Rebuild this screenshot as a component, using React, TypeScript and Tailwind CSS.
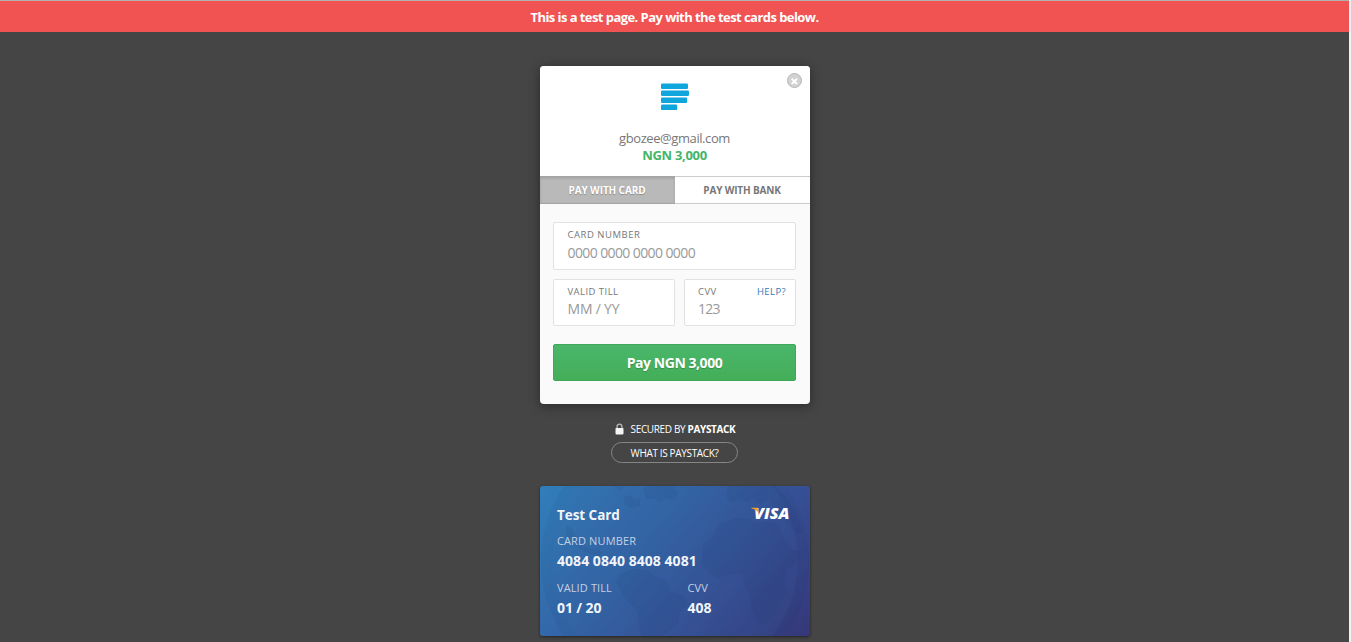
import React from "react";

function BrandMark() {
  return (
    <svg width="30" height="30" viewBox="0 0 30 30" fill="#0fa5dd" className="block">
      <rect x="1" y="1.5" width="27" height="5.5" rx="1.2" />
      <rect x="1" y="8.5" width="28" height="5.5" rx="1.2" />
      <rect x="1" y="15.5" width="26.2" height="5.5" rx="1.2" />
      <rect x="1" y="22.6" width="16.2" height="5.5" rx="1.2" />
    </svg>
  );
}

function CloseIcon() {
  return (
    <svg width="16" height="16" viewBox="0 0 16 16" className="block">
      <circle cx="8.5" cy="8.5" r="7" fill="#d2d2d2" stroke="#b8b8b8" strokeWidth="1" />
      <path d="M5.7 6.8l5.4 5.2M11.1 6.8l-5.4 5.2" stroke="#fff" strokeWidth="1.9" />
    </svg>
  );
}

function LockIcon() {
  return (
    <svg width="9" height="12" viewBox="0 0 9 12" className="block">
      <path d="M2.1 5.5V3.5a2.4 2.4 0 0 1 4.8 0v2" fill="none" stroke="#b9b9b9" strokeWidth="1.3" />
      <rect x="0.5" y="5" width="8" height="6.4" rx="0.8" fill="#f4f4f4" />
    </svg>
  );
}

function Globe() {
  return (
    <svg width="270" height="150" viewBox="0 0 270 150" className="absolute inset-0">
      <circle cx="135" cy="75" r="134" fill="#0b3a5c" fillOpacity="0.06" />
      <circle cx="135" cy="75" r="123" fill="#4a7cc0" fillOpacity="0.09" />
      <g fill="#102a5c" fillOpacity="0.07">
        <path d="M26 40c5 0 8 4 9 10l6 8 9 5 8 0 5 4-4 3-12-3-13-8-8-10z" />
        <path d="M80 88l14-5 13 1 9 7 10 4 4 10 14 5 3 7-7 10-3 11-10 8-5 4h-20l-3-8-1-17-12-11-7-12-3-7z" />
        <path d="M188 0h48c13 13 22 29 27 48l-8-2-9-9-3-10-8-4-6-9-10 4-5-7-7 6-8-5-6 5-7-6z" />
        <path d="M180 38l16-6 14 1 6 4 12-2 11 5 5 13 9 11 9 2-6 11-10 8-2 13 4 7-8 11-7 14-10 7-6-1-6-15-1-12-5-10-3-11-15 1-9 3-10-5-6-9 1-19 8-7z" />
        <path d="M84 11l7-2 3 5 6-1v7l-9 2-7-4zM74 0h10l-4 5zM103 2l10-2h20l6 7-5 7-10-2-3 5-7-4-8 0z" />
      </g>
    </svg>
  );
}

function VisaLogo() {
  return (
    <svg width="39" height="14" viewBox="0 0 39 14" className="mt-[2px] block overflow-visible">
      <text
        x="3"
        y="12"
        textLength="35.5"
        lengthAdjust="spacingAndGlyphs"
        fill="#fff"
        className="font-['Open_Sans',sans-serif] text-[15px] font-extrabold italic"
      >
        VISA
      </text>
      <path d="M0.4 0.8h6l1.6 6C6.2 3.6 3.8 2.2 0.4 1.6z" fill="#f3a01c" />
    </svg>
  );
}

export default function App() {
  return (
    <div className="flex h-[642px] overflow-hidden bg-[#454545] font-['Open_Sans','Noto_Sans',sans-serif]">
      <div className="flex w-[1349px] shrink-0 flex-col items-center">
        <div className="h-px w-full bg-[#b5b0b0]" />
        <div className="flex h-[31px] w-full items-center justify-center bg-[#f05352] pt-[2px] text-[13px] font-bold text-white">
          <span className="whitespace-nowrap tracking-[-0.56px]">This is a test page. Pay with the test cards below.</span>
        </div>

        <main className="ml-px mt-[34px] flex w-[270px] flex-col items-center">
          <section className="relative h-[338px] w-[270px] rounded-[4px] bg-[#fafafa] shadow-[0_2px_12px_rgba(0,0,0,0.4)]">
            <button className="absolute right-[8px] top-[6px]" aria-label="Close">
              <CloseIcon />
            </button>
            <header className="flex h-[110px] flex-col items-center rounded-t-[4px] bg-white pt-[16px]">
              <BrandMark />
              <p className="mt-[18px] h-[17px] whitespace-nowrap pr-px text-[13px] leading-[17px] tracking-[-0.42px] text-[#777]">gbozee@gmail.com</p>
              <p className="h-[17px] whitespace-nowrap pr-px text-[13px] font-bold leading-[17px] tracking-[-0.3px] text-[#43b567]">NGN 3,000</p>
            </header>
            <nav className="flex h-[28px] border-y border-[#cbcbcb] text-[10px] font-bold">
              <div className="-my-px flex w-[135px] items-center justify-center border-y border-[#a5a5a5] bg-[#b9b9b9] pr-px text-white shadow-[inset_0_1px_3px_rgba(0,0,0,0.15)] [text-shadow:0_1px_1px_rgba(0,0,0,0.25)]">
                <span className="tracking-[-0.1px]">PAY WITH CARD</span>
              </div>
              <div className="flex w-[135px] items-center justify-center bg-white pr-px text-[#777]">
                <span className="tracking-[-0.15px]">PAY WITH BANK</span>
              </div>
            </nav>
            <form className="pl-[13px] pr-[14px] pt-[18px]">
              <div className="h-[48px] rounded-[2px] border border-[#e2e2e2] bg-white pl-[13.5px] pt-[5px]">
                <div className="h-[14px] text-[9.5px] leading-[14px] tracking-[0.52px] text-[#777]">CARD NUMBER</div>
                <div className="mt-px h-[19px] text-[14px] leading-[19px] tracking-[-0.6px] text-[#999]">0000 0000 0000 0000</div>
              </div>
              <div className="mt-[9px] flex gap-[9px]">
                <div className="h-[47px] w-[122px] rounded-[2px] border border-[#e2e2e2] bg-white pl-[13.5px] pt-[5px]">
                  <div className="h-[14px] text-[9.5px] leading-[14px] tracking-[0.45px] text-[#777]">VALID TILL</div>
                  <div className="h-[19px] text-[14px] leading-[19px] tracking-[-0.2px] text-[#999]">MM / YY</div>
                </div>
                <div className="h-[47px] w-[112px] rounded-[2px] border border-[#e2e2e2] bg-white pl-[13px] pr-[9px] pt-[5px]">
                  <div className="flex h-[14px] justify-between text-[9.5px] leading-[14px] tracking-[0.4px] text-[#777]">
                    <span>CVV</span>
                    <span className="text-[#337ab7]">HELP?</span>
                  </div>
                  <div className="h-[19px] text-[14px] leading-[19px] tracking-[-0.7px] text-[#999]">123</div>
                </div>
              </div>
              <button
                type="button"
                className="mt-[18px] flex h-[37px] w-[243px] items-center justify-center rounded-[2px] border border-[#3fa65a] bg-linear-to-b from-[#49b66a] to-[#44ae58] text-[14px] font-bold text-white [text-shadow:0_1px_1px_rgba(0,0,0,0.2)]"
              >
                <span className="tracking-[-0.45px]">Pay NGN 3,000</span>
              </button>
            </form>
          </section>

          <div className="mt-[18px] flex h-[14px] items-center gap-[7px] whitespace-nowrap text-[10px] leading-[14px] text-white">
            <LockIcon />
            <span className="tracking-[-0.35px]">SECURED BY <b className="tracking-[-0.35px]">PAYSTACK</b></span>
          </div>
          <button className="mr-px mt-[6px] flex h-[21px] w-[127px] items-center justify-center rounded-full border border-[#858585] pt-[2px] text-[10px] text-white">
            <span className="tracking-[-0.35px]">WHAT IS PAYSTACK?</span>
          </button>

          <section className="relative mt-[23px] h-[150px] w-[270px] overflow-hidden rounded-[3px] bg-[linear-gradient(130deg,#317ebb_0%,#3463a6_40%,#364f94_68%,#353779_100%)] shadow-[0_1px_3px_rgba(0,0,0,0.5)]">
            <Globe />
            <div className="relative px-[17px] pt-[19px] text-white">
              <div className="flex h-[20px] justify-between pr-[3px]">
                <h2 className="text-[13.5px] font-bold leading-[20px] tracking-[-0.05px] text-[#f1f5fa]">Test Card</h2>
                <VisaLogo />
              </div>
              <div className="mt-[8px] h-[16px] text-[11px] leading-[16px] tracking-[0.12px] text-[#c5d1e3]">CARD NUMBER</div>
              <div className="mt-[3px] h-[18px] text-[14px] font-bold leading-[18px] tracking-[0.04px] text-[#f1f5fa]">4084 0840 8408 4081</div>
              <div className="mt-[10px] flex h-[16px] text-[11px] leading-[16px] tracking-[0.12px] text-[#c5d1e3]">
                <span className="w-[130.5px]">VALID TILL</span>
                <span>CVV</span>
              </div>
              <div className="mt-[3px] flex h-[18px] text-[14px] font-bold leading-[18px] text-[#f1f5fa]">
                <span className="w-[130.5px] tracking-[-0.1px]">01 / 20</span>
                <span>408</span>
              </div>
            </div>
          </section>
        </main>
      </div>
      <div className="w-[2px] shrink-0 bg-[#f1f1f1]" />
    </div>
  );
}
